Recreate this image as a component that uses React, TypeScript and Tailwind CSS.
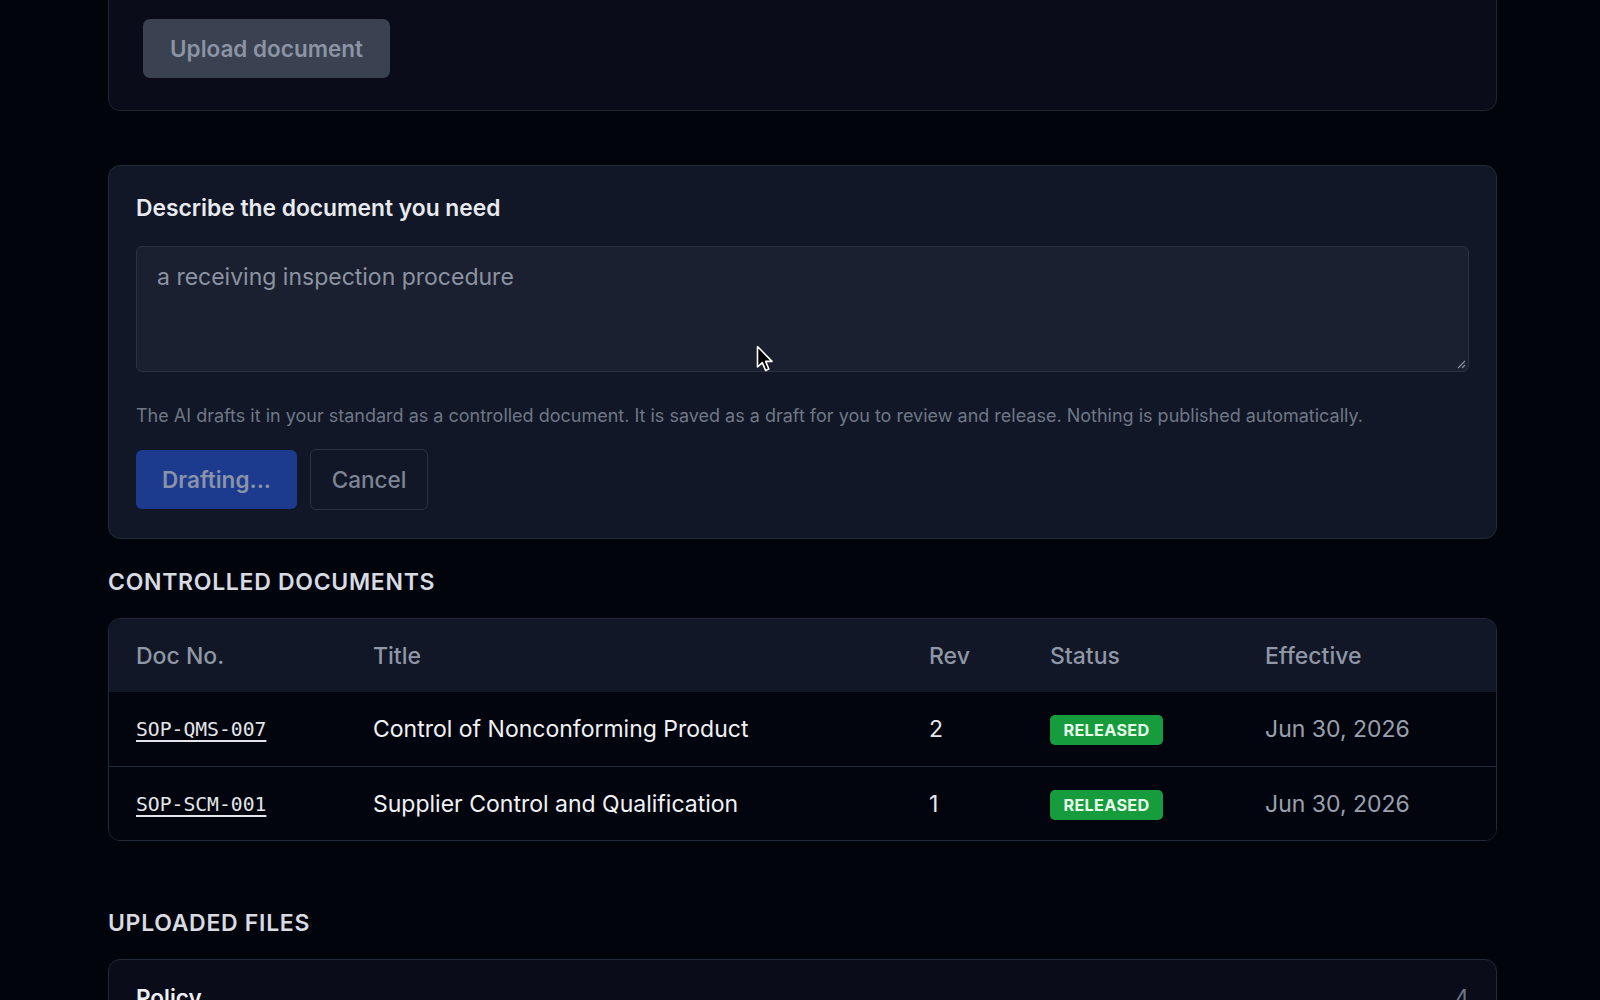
import React from "react";

const rows = [
  { no: "SOP-QMS-007", title: "Control of Nonconforming Product", rev: "2", status: "RELEASED", eff: "Jun 30, 2026" },
  { no: "SOP-SCM-001", title: "Supplier Control and Qualification", rev: "1", status: "RELEASED", eff: "Jun 30, 2026" },
];

function Cursor() {
  return (
    <svg className="absolute left-[756px] top-[345px] pointer-events-none" width="18" height="28" viewBox="0 0 18 28">
      <path d="M1.5 1.5 L1.5 22 L6.3 17.6 L9.6 25.4 L12.8 24 L9.6 16.4 L16 16.4 Z" fill="#000" stroke="#fff" strokeWidth="1.6" strokeLinejoin="round" />
    </svg>
  );
}

export default function App() {
  return (
    <div className="relative h-[1000px] overflow-hidden bg-[#02040c] font-['Inter','Noto_Sans',sans-serif] text-[#e5e7eb]">
      <div className="ml-[108px] w-[1389px]">
        {/* top card (scrolled partly out of view) */}
        <div className="-mt-[20px] rounded-[12px] border border-[#1f2533] bg-[#0a0d19] pl-[34px] pr-[26px] pt-[38px] pb-[32px]">
          <button className="h-[59px] w-[247px] rounded-[7px] bg-[#3a4150] text-[22.5px] font-semibold leading-[30px] text-[#8b94a4]">
            Upload document
          </button>
        </div>

        {/* describe card */}
        <div className="mt-[54px] rounded-[12px] border border-[#222937] bg-[#111726] px-[27px] pt-[28px] pb-[28px]">
          <div className="text-[22.8px] font-semibold leading-[28px] text-[#e8eaf0]">Describe the document you need</div>
          <div className="relative mt-[24px] h-[126px] rounded-[6px] border border-[#2a3140] bg-[#1a2030] px-[20px] py-[15px] text-[23px] leading-[30px] text-[#8c93a1]">
            a receiving inspection procedure
            <svg className="absolute right-[2px] bottom-[2px]" width="10" height="10" viewBox="0 0 10 10">
              <path d="M9 2 L2 9 M9 6 L6 9" stroke="#8a919e" strokeWidth="1.2" />
            </svg>
          </div>
          <p className="mt-[31px] text-[18px] leading-[25px] text-[#6f7787]">
            The AI drafts it in your standard as a controlled document. It is saved as a draft for you to review and release. Nothing is published automatically.
          </p>
          <div className="mt-[21px] flex items-center gap-[13px]">
            <button className="h-[59px] w-[161px] rounded-[6px] bg-[#1c3a8e] text-[22.5px] font-semibold leading-[30px] text-[#8a93a7]">
              Drafting...
            </button>
            <button className="h-[61px] w-[118px] rounded-[6px] border border-[#2a3140] text-[22.5px] font-medium leading-[30px] text-[#7d8594]">
              Cancel
            </button>
          </div>
        </div>

        {/* controlled documents */}
        <h2 className="mt-[29px] text-[23px] font-semibold leading-[28px] tracking-[0.7px] text-[#d8dbe2]">CONTROLLED DOCUMENTS</h2>
        <div className="mt-[22px] overflow-hidden rounded-[12px] border border-[#222937]">
          <div className="grid h-[73px] grid-cols-[237px_556px_121px_215px_1fr] items-center bg-[#111726] text-[23px] font-medium leading-[30px] text-[#8f97a6]">
            <div className="px-[27px]">Doc No.</div>
            <div className="px-[27px]">Title</div>
            <div className="px-[27px]">Rev</div>
            <div className="px-[27px]">Status</div>
            <div className="px-[27px]">Effective</div>
          </div>
          {rows.map((r, i) => (
            <div
              key={r.no}
              className={
                "grid h-[74px] grid-cols-[237px_556px_121px_215px_1fr] items-center bg-[#03050e] text-[23px] leading-[30px] " +
                (i > 0 ? "border-t border-[#222937]" : "")
              }
            >
              <div className="px-[27px]">
                <span className="font-['DejaVu_Sans_Mono',monospace] text-[19.7px] text-[#e3e5ea] underline decoration-[1.5px] underline-offset-[4px]">
                  {r.no}
                </span>
              </div>
              <div className="px-[27px] text-[#f1f2f5]">{r.title}</div>
              <div className="px-[27px] text-[#e6e8ec]">{r.rev}</div>
              <div className="px-[27px]">
                <span className="inline-flex h-[30px] w-[113px] items-center justify-center rounded-[5px] bg-[#169c3d] text-[16.25px] font-bold leading-[20px] tracking-[0.3px] text-[#e6fbe9]">
                  {r.status}
                </span>
              </div>
              <div className="px-[27px] text-[#9aa1ae]">{r.eff}</div>
            </div>
          ))}
        </div>

        {/* uploaded files */}
        <h2 className="mt-[68px] text-[23px] font-semibold leading-[28px] tracking-[0.7px] text-[#d8dbe2]">UPLOADED FILES</h2>
        <div className="mt-[22px] rounded-[12px] border border-[#222937] bg-[#0a0d19] px-[27px] pt-[24px] pb-[26px]">
          <div className="flex items-center justify-between">
            <span className="text-[22.5px] font-semibold leading-[28px] text-[#eef0f4]">Policy</span>
            <span className="text-[22.5px] leading-[28px] text-[#6f7787]">4</span>
          </div>
        </div>
      </div>
      <Cursor />
    </div>
  );
}
